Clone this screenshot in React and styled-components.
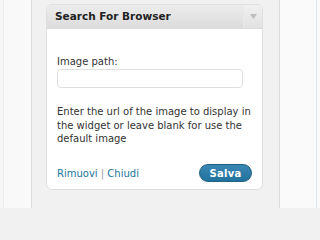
import React, { useState } from "react";
import styled, { createGlobalStyle } from "styled-components";

const GlobalStyle = createGlobalStyle`
  html, body {
    margin: 0;
    padding: 0;
    height: 208px;
    overflow: hidden;
    background: #f1f1f1;
  }
  * {
    box-sizing: border-box;
  }
`;

const Page = styled.div`
  display: flex;
  height: 208px;
  font-family: "DejaVu Sans", Verdana, sans-serif;
  color: #333;
`;

const SideColumn = styled.div`
  width: ${(p) => p.width}px;
  flex-shrink: 0;
  background: #f9f9f9;
  border-left: ${(p) => (p.inner ? "3px solid #f6f6f6" : "none")};
  border-right: 1px solid #dcdcdc;
  box-shadow: ${(p) => (p.inner ? "inset 1px 0 0 #ececec" : "none")};
`;

const RightColumn = styled.div`
  flex: 1;
  background: #fafafa;
  border-left: 1px solid #dcdcdc;
  display: flex;
  justify-content: flex-end;
`;

const BlueEdge = styled.div`
  width: 4px;
  background: #fafafa;
  border-left: 1px solid #dfe6ee;
`;

const Main = styled.div`
  width: 247px;
  flex-shrink: 0;
  padding: 4px 16px 0 14px;
`;

const Widget = styled.div`
  width: 217px;
  height: 186px;
  background: #fff;
  border: 1px solid #dfdfdf;
  border-radius: 6px;
  overflow: hidden;
  display: flex;
  flex-direction: column;
`;

const Header = styled.div`
  display: flex;
  height: 24px;
  background: linear-gradient(#ececec, #dcdcdc);
  border-bottom: 1px solid #dcdcdc;
`;

const Title = styled.h3`
  flex: 1;
  margin: 0;
  padding: 0 0 0 8px;
  font-size: 10.5px;
  font-weight: bold;
  line-height: 23px;
  color: #222;
  white-space: nowrap;
`;

const Toggle = styled.div`
  width: 19px;
  border-left: 1px solid #e8e8e8;
  background: linear-gradient(#f0f0f0, #e2e2e2);
  display: flex;
  justify-content: center;
  padding-top: 9px;
`;

const Body = styled.div`
  flex: 1;
  padding: 0 10px 0 10px;
  display: flex;
  flex-direction: column;
`;

const Label = styled.label`
  display: block;
  margin-top: 26px;
  font-size: 10px;
  line-height: 13px;
`;

const Input = styled.input`
  display: block;
  width: 186px;
  height: 19px;
  margin-top: 1px;
  border: 1px solid #dfdfdf;
  border-radius: 4px;
  background: #fff;
  outline: none;
  font-size: 10px;
`;

const Help = styled.p`
  margin: 17px 0 0;
  font-size: 10px;
  line-height: 13.5px;
  color: #333;
`;

const Footer = styled.div`
  margin-top: auto;
  display: flex;
  align-items: center;
  justify-content: space-between;
  padding: 0 0 7px 0;
`;

const Links = styled.div`
  font-size: 10px;
  color: #999;
`;

const Link = styled.a`
  color: #21759b;
  text-decoration: none;
`;

const SaveButton = styled.button`
  width: 53px;
  height: 18px;
  border: 1px solid #1f6185;
  border-radius: 10px;
  background: linear-gradient(#3a87b2, #21729e);
  color: #fff;
  font-family: "DejaVu Sans", Verdana, sans-serif;
  font-size: 10px;
  font-weight: bold;
  letter-spacing: 0.3px;
  padding: 0;
  cursor: pointer;
`;

export default function App() {
  const [path, setPath] = useState("");

  return (
    <>
      <GlobalStyle />
      <Page>
        <SideColumn width={32} inner />
        <Main>
          <Widget>
            <Header>
              <Title>Search For Browser</Title>
              <Toggle>
                <svg width="7" height="5" viewBox="0 0 7 5">
                  <path d="M0 0h7L3.5 5z" fill="#bdbdbd" />
                </svg>
              </Toggle>
            </Header>
            <Body>
              <Label htmlFor="image-path">Image path:</Label>
              <Input
                id="image-path"
                value={path}
                onChange={(e) => setPath(e.target.value)}
              />
              <Help>
                Enter the url of the image to display in the widget or leave
                blank for use the default image
              </Help>
              <Footer>
                <Links>
                  <Link href="#">Rimuovi</Link> | <Link href="#">Chiudi</Link>
                </Links>
                <SaveButton>Salva</SaveButton>
              </Footer>
            </Body>
          </Widget>
        </Main>
        <RightColumn>
          <BlueEdge />
        </RightColumn>
      </Page>
    </>
  );
}
